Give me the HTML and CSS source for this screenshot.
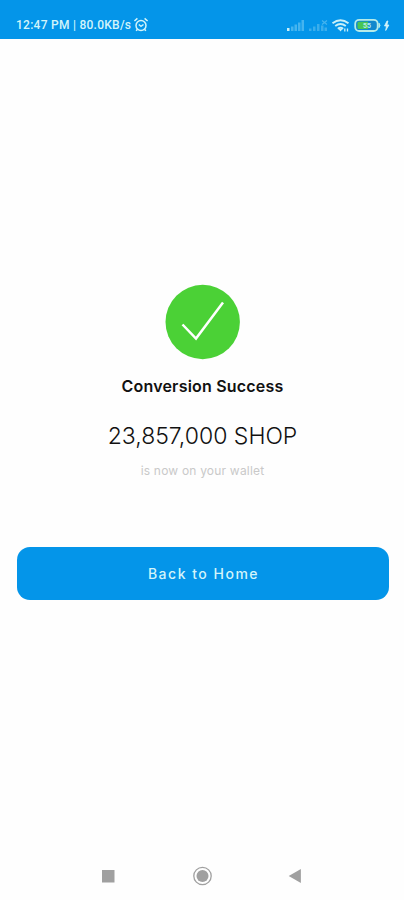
FILE: index.html
```html
<!DOCTYPE html>
<html lang="en">
<head>
<meta charset="utf-8">
<title>Conversion Success</title>
<link rel="stylesheet" href="styles.css">
</head>
<body>
<header class="status">
  <span class="status-text">12:47 PM | 80.0KB/s</span>
  <svg class="alarm" width="16" height="16" viewBox="0 0 16 16" fill="none" stroke="currentColor" stroke-width="1.5">
    <circle cx="8" cy="8.5" r="5"/>
    <path d="M1.4 4 4.400 1.400M14.600 4 11.600 1.400M5.800 7.500 8 9.300 10.500 7.500M4.400 12.200l-1.200 1.700M11.600 12.200l1.200 1.700"/>
  </svg>
  <svg class="indicators" width="106" height="18" viewBox="0 0 106 18">
    <g fill="#45b4ef">
      <path fill="#c9f0f8" d="M1 12h2.500v3H1z"/>
      <path d="M5 10.500h2.500V15H5zM8.500 8.500H11V15H8.500zM12 6.500h2.500V15H12zM15.500 4H18v11h-2.500z"/>
    </g>
    <g fill="#3baeec">
      <path d="M23 12.500h2.500V15H23zM27 10.500h2.500V15H27zM31 8h2.500v7H31zM35 9.500h2.500V15H35zM38.500 11.500H41V15h-2.500z"/>
      <path d="m36 4.500 5 4M41 4.500l-5 4" stroke="#45b4ef" stroke-width="1.200"/>
    </g>
    <g fill="none" stroke="#c9f0f8" stroke-width="1.900">
      <path d="M46.500 7.200q8-6 16 0M49.200 10q5.300-4 10.600 0M51.800 12.700q2.700-2 5.400 0"/>
      <path d="M58.800 12.500v3M61.500 12.500v3" stroke-width="1.300"/>
    </g>
    <path d="m52.500 13 2 2.500 2-2.500z" fill="#c9f0f8"/>
    <rect x="69.200" y="3.800" width="22.500" height="11.200" rx="4" fill="#1188cd" stroke="#b5ebe9" stroke-width="1.800"/>
    <path d="M73 5.800h9v7.200h-9a1.500 1.500 0 0 1-1.500-1.500V7.300A1.500 1.500 0 0 1 73 5.800z" fill="#48c653"/>
    <path d="M93 7.200q2 2.200 0 4.400z" fill="#b5ebe9" stroke="#b5ebe9"/>
    <text class="battery-level" x="81" y="12" text-anchor="middle">55</text>
    <path d="M101 5 98.500 10h2l-.8 4.500 3.200-5.500h-2l1-4z" fill="#d3f4fa" stroke="#d3f4fa" stroke-width=".8"/>
  </svg>
</header>
<main class="content">
  <svg class="success" width="76" height="76" viewBox="0 0 76 76">
    <circle cx="37.700" cy="38" r="37.200" fill="#4bd136"/>
    <path d="M17.500 40.500 31 54.500 58 18.500" fill="none" stroke="#fff" stroke-width="2.500"/>
  </svg>
  <h1 class="title">Conversion Success</h1>
  <p class="amount">23,857,000 SHOP</p>
  <p class="note">is now on your wallet</p>
  <button class="home" type="button">Back to Home</button>
</main>
<nav class="nav">
  <svg width="20" height="20" viewBox="0 0 20 20"><path d="M4 4h12.500v12.500H4z"/></svg>
  <svg width="20" height="20" viewBox="0 0 20 20"><circle cx="10.500" cy="10" r="8.700" fill="none" stroke="#a0a0a0" stroke-width="1.300"/><circle cx="10.500" cy="10" r="6"/></svg>
  <svg width="20" height="20" viewBox="0 0 20 20"><path d="M2.700 10 14.900 3v14z"/></svg>
</nav>
</body>
</html>
```
FILE: styles.css
```css
* { box-sizing: border-box; }
body {
  margin: 0;
  height: 900px;
  display: flex;
  flex-direction: column;
  background: #fefefe;
  color: #111;
  font-family: Inter, "Liberation Sans", sans-serif;
}
.status {
  height: 39px;
  flex: none;
  display: flex;
  align-items: center;
  padding: 10px 12px 0 16px;
  background: #0495e9;
  color: #d3f4fa;
}
.status-text {
  font: 500 12px/16px Roboto, sans-serif;
  letter-spacing: 0.26px;
  white-space: nowrap;
}
.alarm { margin-left: 2px; }
.indicators { margin-left: auto; }
.battery-level {
  font: 700 7px Roboto, sans-serif;
  fill: #b5ebe9;
}
.content {
  flex: 1;
  display: flex;
  flex-direction: column;
  align-items: center;
  padding: 245px 15px 0 16px;
}
.success { flex: none; }
.title {
  margin: 16px 0 0;
  font-size: 16px;
  line-height: 20px;
  font-weight: 600;
  letter-spacing: 0.2px;
}
.amount {
  margin: 25px 0 0;
  font-size: 23px;
  line-height: 30px;
  font-weight: 300;
}
.note {
  margin: 12px 0 0;
  font-size: 12px;
  line-height: 16px;
  color: #c9c9c9;
  letter-spacing: 0.2px;
}
.home {
  width: 372px;
  height: 53px;
  margin: 68px 0 0;
  padding: 0 0 0 2px;
  border: 0;
  border-radius: 13px;
  background: #0495e9;
  color: #d3f4fa;
  font: 500 14px/20px Inter, sans-serif;
  letter-spacing: 1.5px;
}
.nav {
  height: 48px;
  display: flex;
  justify-content: space-between;
  align-items: center;
  padding: 0 98px;
  fill: #a0a0a0;
}
```
